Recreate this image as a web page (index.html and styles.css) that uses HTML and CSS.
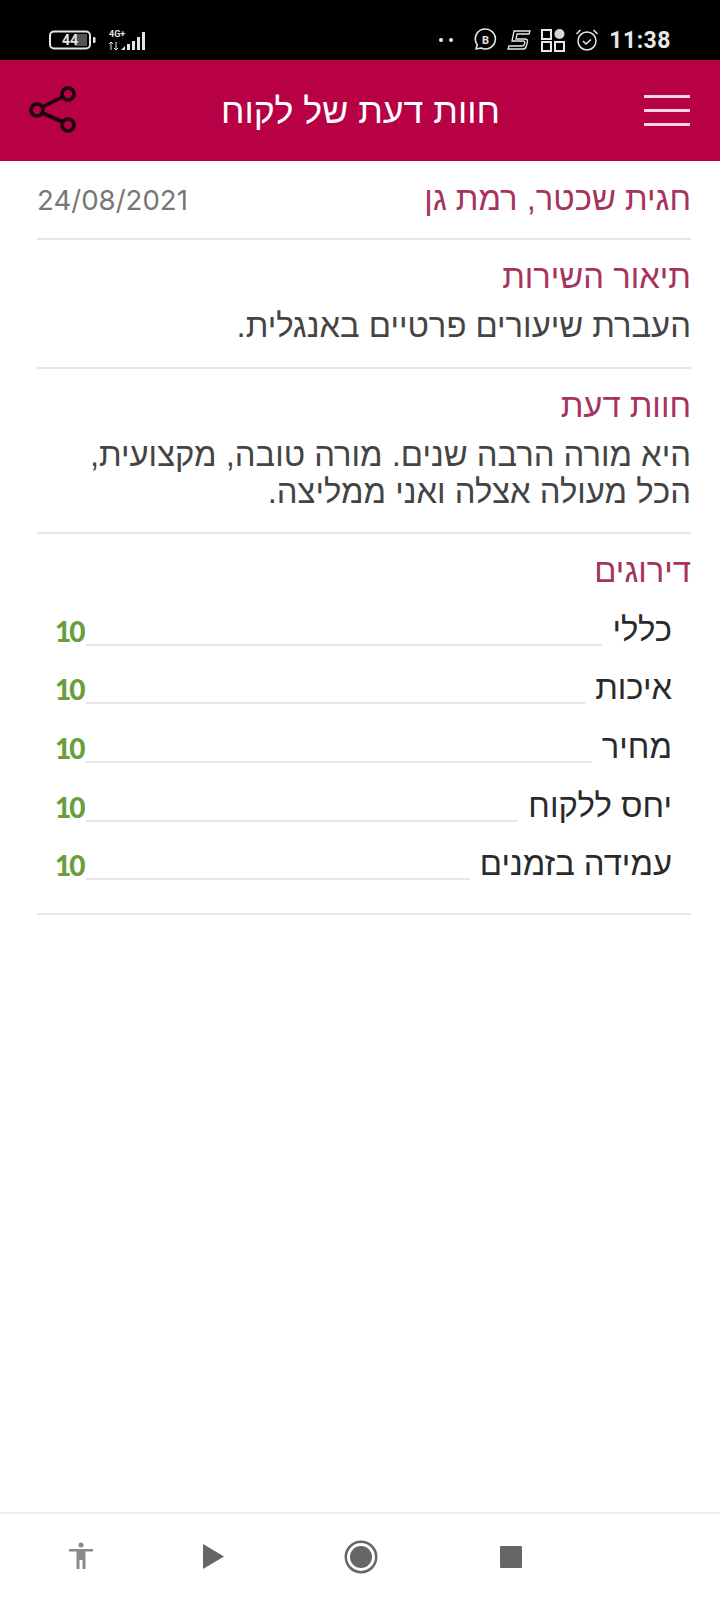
FILE: index.html
```html
<!DOCTYPE html>
<html lang="he">
<head>
<meta charset="utf-8">
<title>חוות דעת של לקוח</title>
<link rel="stylesheet" href="styles.css">
</head>
<body>
<div class="status">
  <div class="status-left">
    <svg class="ic-batt" width="48" height="20" viewBox="0 0 48 20"><rect x="1" y="1.5" width="40" height="17" rx="4" fill="none" stroke="#e4e4e4" stroke-width="2"/><rect x="26" y="4" width="12" height="12" fill="#555"/><rect x="44" y="7" width="2.5" height="6" rx="1" fill="#e4e4e4"/><text x="21" y="15" text-anchor="middle" class="batt-text">44</text></svg>
    <svg class="ic-signal" width="40" height="22" viewBox="0 0 40 22"><text x="0" y="8" class="net-text">4G+</text><path d="M2 13v8M0 15l2-2 2 2M7 13v8M5 19l2 2 2-2" fill="none" stroke="#e4e4e4" stroke-width="1"/><path d="M12 21l4-4v4zM18 15h3v6h-3zM23 12h3v9h-3zM28 8h3v13h-3zM33 3h3v18h-3z" fill="#e4e4e4"/></svg>
  </div>
  <div class="status-right">
    <span class="dots"><i></i><i></i></span>
    <svg width="24" height="24" viewBox="0 0 24 24"><path d="M3 21l1.2-4.2A10 10 0 1 1 8 20z" fill="none" stroke="#e8e8e8" stroke-width="1.6" stroke-linejoin="round"/><text x="12.5" y="16" text-anchor="middle" class="b-text">B</text></svg>
    <svg width="24" height="22" viewBox="0 0 24 22"><path d="M7 2h16l-1 3H10l-1 5h9q3 0 2.400 3l-1 4q-.6 3-3.400 3H1l1-3h13q2 0 2.300-1.500l.5-2q.2-1.500-1.800-1.500H5z" fill="none" stroke="#e8e8e8" stroke-width="1.300"/></svg>
    <svg width="24" height="24" viewBox="0 0 24 24"><g fill="none" stroke="#e8e8e8" stroke-width="2"><rect x="1" y="2" width="9" height="9"/><rect x="1" y="14" width="9" height="9"/><rect x="14" y="14" width="9" height="9"/></g><circle cx="18.500" cy="6" r="5" fill="#d8d8d8"/></svg>
    <svg width="24" height="24" viewBox="0 0 24 24"><g fill="none" stroke="#e8e8e8" stroke-width="1.500"><circle cx="12" cy="13" r="9"/><path d="M8 13l3 3 5-4.500M1.500 6l4-4M22.500 6l-4-4"/></g></svg>
    <span class="clock">11:38</span>
  </div>
</div>

<header class="topbar">
  <svg class="share" width="50" height="50" viewBox="0 0 50 50"><g fill="none" stroke="#1a0008" stroke-width="3.600"><circle cx="40" cy="9" r="6"/><circle cx="9" cy="25" r="6"/><circle cx="40" cy="40" r="6"/><path d="M14.500 22L34.500 12M14.500 28L34.500 37"/></g></svg>
  <h1 class="title">חוות דעת של לקוח</h1>
  <div class="menu"><i></i><i></i><i></i></div>
</header>

<main class="content">
  <section class="sec sec-top">
    <h2 class="head">חגית שכטר, רמת גן</h2>
    <span class="date">24/08/2021</span>
  </section>
  <section class="sec sec-service">
    <h2 class="head">תיאור השירות</h2>
    <p class="body">העברת שיעורים פרטיים באנגלית.</p>
  </section>
  <section class="sec sec-opinion">
    <h2 class="head">חוות דעת</h2>
    <p class="body">היא מורה הרבה שנים. מורה טובה, מקצועית,<br>הכל מעולה אצלה ואני ממליצה.</p>
  </section>
  <section class="sec sec-ratings">
    <h2 class="head">דירוגים</h2>
    <div class="rows">
      <div class="row"><span class="label">כללי</span><span class="leader"></span><span class="score">10</span></div>
      <div class="row"><span class="label">איכות</span><span class="leader"></span><span class="score">10</span></div>
      <div class="row"><span class="label">מחיר</span><span class="leader"></span><span class="score">10</span></div>
      <div class="row"><span class="label">יחס ללקוח</span><span class="leader"></span><span class="score">10</span></div>
      <div class="row"><span class="label">עמידה בזמנים</span><span class="leader"></span><span class="score">10</span></div>
    </div>
  </section>
</main>

<nav class="navbar">
  <svg class="nav-a" width="26" height="28" viewBox="0 0 26 28"><circle cx="13" cy="3" r="2.500" fill="#8a8a8a"/><path d="M1 7h24v2.500h-7.500V27h-3v-9h-3v9h-3V9.500H1z" fill="#8a8a8a"/></svg>
  <svg class="nav-b" width="22" height="26" viewBox="0 0 22 26"><path d="M0 0l21 12.500L0 25z" fill="#666"/></svg>
  <svg class="nav-c" width="34" height="34" viewBox="0 0 34 34"><circle cx="17" cy="17" r="15.200" fill="none" stroke="#666" stroke-width="2.500"/><circle cx="17" cy="17" r="11" fill="#666"/></svg>
  <svg class="nav-d" width="22" height="22" viewBox="0 0 22 22"><rect width="22" height="22" rx="1" fill="#666"/></svg>
</nav>
</body>
</html>
```

FILE: styles.css
```css
* { box-sizing: border-box; }
html, body { margin: 0; padding: 0; }
body {
  width: 720px;
  height: 1600px;
  display: flex;
  flex-direction: column;
  background: #fff;
  font-family: "Liberation Sans", sans-serif;
}

.status {
  height: 60px;
  flex: none;
  background: #000;
  display: flex;
  justify-content: space-between;
  align-items: center;
  padding: 20px 49px 0 49px;
}
.status-left { display: flex; align-items: center; gap: 12px; margin-top: -1px; }
.status-right { display: flex; align-items: center; gap: 10px; }
.batt-text { font: bold 14px Roboto, sans-serif; fill: #e4e4e4; }
.net-text { font: bold 9px Roboto, sans-serif; fill: #e4e4e4; }
.b-text { font: bold 11px Roboto, sans-serif; fill: #e8e8e8; }
.dots { display: flex; gap: 6px; margin-right: 10px; }
.dots i { width: 4px; height: 4px; background: #eee; border-radius: 50%; }
.clock { font: 700 23px/1 Roboto, sans-serif; color: #e8e8e8; letter-spacing: .5px; }

.topbar {
  height: 101px;
  flex: none;
  background: #b80044;
  display: flex;
  align-items: center;
  justify-content: space-between;
  padding: 0 30px 0 28px;
  position: relative;
}
.title {
  margin: 0;
  direction: rtl;
  font-size: 35.700px;
  font-weight: 400;
  color: #fff;
  position: absolute;
  right: 220px;
  top: 50%;
  transform: translateY(-50%);
  white-space: nowrap;
}
.share { margin-top: -1px; }
.menu { display: flex; flex-direction: column; gap: 11px; }
.menu i { display: block; width: 46px; height: 3px; background: #f6d5e2; }

.content { flex: 1; direction: rtl; padding: 0 29px 0 37px; }
.sec { border-bottom: 2px solid #e6e6e6; }
.head { margin: 0; font-size: 32.800px; font-weight: 400; line-height: 40px; color: #a8325f; }
.sec-top { height: 79px; display: flex; justify-content: space-between; align-items: center; padding-bottom: 2px; }
.date { direction: ltr; font-family: "Inter", sans-serif; font-size: 27.600px; color: #777; margin-top: 2px; }
.sec-service { height: 129px; padding-top: 17px; }
.sec-opinion { height: 165px; padding-top: 17px; }
.sec-ratings { height: 381px; padding-top: 17px; }
.body { margin: 0; font-size: 32.800px; line-height: 37px; color: #444; padding-top: 10px; }

.rows { padding: 0 19px 0 18px; }
.row { display: flex; align-items: flex-end; height: 58.700px; }
.label { font-size: 32.800px; line-height: 40px; color: #2a2a2a; }
.leader { flex: 1; height: 2px; background: #e6e6e6; margin: 0 10px 4px 0; }
.score { font: 900 28px/38px "Lato", sans-serif; letter-spacing: -2px; color: #699e3c; width: 31px; direction: ltr; text-align: left; }

.navbar {
  height: 88px;
  flex: none;
  border-top: 2px solid #eee;
  display: flex;
  align-items: center;
  padding-left: 68px;
  padding-bottom: 3px;
}
.nav-a { margin-right: 109px; }
.nav-b { margin-right: 119px; margin-top: 2px; }
.nav-c { margin-right: 122px; margin-top: 2px; }
.nav-d { margin-top: 2px; }
```
